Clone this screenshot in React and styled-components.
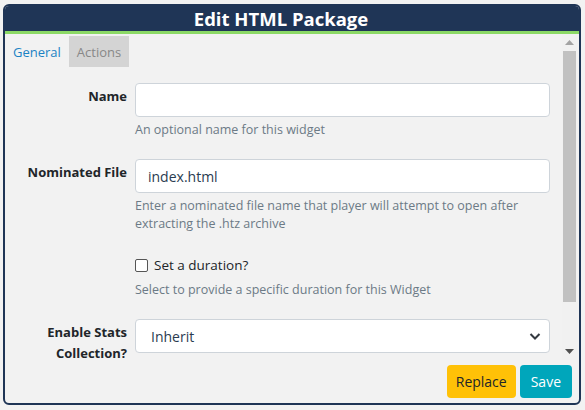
import React from "react";
import styled, { createGlobalStyle } from "styled-components";

const Global = createGlobalStyle`
  html, body { margin: 0; padding: 0; background: #f2f2f2; }
  body { font-family: "Open Sans", "Noto Sans", sans-serif; color: #212529; }
  * { box-sizing: border-box; }
`;

const Page = styled.div`
  padding: 4px 4px 5px 3px;
  height: 410px;
`;

const Panel = styled.div`
  width: 578px;
  height: 401px;
  border: 2px solid #1f3556;
  border-radius: 6px;
  background: #f2f2f2;
  display: flex;
  flex-direction: column;
  overflow: hidden;
`;

const Header = styled.div`
  flex: none;
  background: #1f3556;
  color: #fff;
  height: 28px;
  border-bottom: 3px solid #8cd966;
  display: flex;
  align-items: center;
  justify-content: center;
  font-weight: 700;
  font-size: 18.5px;
  padding: 0 22px 1px 0;
`;

const ScrollArea = styled.div`
  flex: 1;
  min-height: 0;
  display: flex;
  margin-right: 2px;
`;

const Content = styled.div`
  flex: 1;
  min-width: 0;
  overflow: hidden;
`;

const Scrollbar = styled.div`
  flex: none;
  width: 15px;
  display: flex;
  flex-direction: column;
  background: #f1f1f1;
`;

const ArrowBtn = styled.div`
  flex: none;
  height: 17px;
  display: flex;
  align-items: center;
  justify-content: center;
`;

const Track = styled.div`
  flex: 1;
  padding: 0 1px;
`;

const Thumb = styled.div`
  height: 251px;
  background: #c1c1c1;
`;

const Tabs = styled.div`
  display: flex;
  margin-top: 2px;
`;

const Tab = styled.div`
  height: 31px;
  padding: 0 8px;
  display: flex;
  align-items: center;
  font-size: 13px;
  color: ${(p) => (p.$active ? "#1b82c4" : "#888")};
  background: ${(p) => (p.$active ? "transparent" : "#d4d4d4")};
`;

const Form = styled.div`
  padding: 16px 12px 0 8px;
`;

const Row = styled.div`
  display: grid;
  grid-template-columns: 114px 1fr;
  column-gap: 8px;
  margin-bottom: 20px;
`;

const Label = styled.label`
  text-align: right;
  font-weight: 700;
  font-size: 13px;
  line-height: 21px;
  padding-top: 3px;
`;

const Input = styled.input`
  display: block;
  width: 100%;
  height: 34px;
  border: 1px solid #ced4da;
  border-radius: 4px;
  background: #fff;
  padding: 0 12px;
  font-family: inherit;
  font-size: 14px;
  color: #2a3b50;
  outline: none;
`;

const SelectBox = styled.div`
  position: relative;
  height: 34px;
  border: 1px solid #ced4da;
  border-radius: 4px;
  background: #fff;
  display: flex;
  align-items: center;
  padding: 0 15px;
  font-size: 14px;
  color: #2a3b50;
`;

const Chevron = styled.svg`
  position: absolute;
  right: 8px;
  top: 12px;
`;

const Help = styled.div`
  margin-top: 4px;
  font-size: 12.5px;
  line-height: 18px;
  color: #6c7a86;
`;

const CheckLine = styled.label`
  display: flex;
  align-items: center;
  gap: 6px;
  font-size: 13.5px;
  height: 24px;
  color: #212529;
`;

const Box = styled.span`
  width: 13px;
  height: 13px;
  border: 1px solid #555;
  border-radius: 2px;
  background: #fff;
`;

const Footer = styled.div`
  flex: none;
  height: 43px;
  display: flex;
  justify-content: flex-end;
  align-items: flex-start;
  gap: 4px;
  padding: 5px 7px 0 0;
`;

const Button = styled.button`
  height: 33px;
  padding: 0 ${(p) => (p.$kind === "warn" ? 9 : 11)}px;
  border: none;
  border-radius: 4px;
  font-family: inherit;
  font-size: 14px;
  background: ${(p) => (p.$kind === "warn" ? "#ffc107" : "#00a6bb")};
  color: ${(p) => (p.$kind === "warn" ? "#212529" : "#fff")};
`;

const Arrow = ({ down, color }) => (
  <svg width="9" height="5" viewBox="0 0 9 5">
    <path d={down ? "M0 0 H9 L4.5 5 Z" : "M0 5 H9 L4.5 0 Z"} fill={color} />
  </svg>
);

export default function App() {
  return (
    <>
      <Global />
      <Page>
        <Panel>
          <Header>Edit HTML Package</Header>
          <ScrollArea>
            <Content>
              <Tabs>
                <Tab $active>General</Tab>
                <Tab>Actions</Tab>
              </Tabs>
              <Form>
                <Row>
                  <Label>Name</Label>
                  <div>
                    <Input defaultValue="" />
                    <Help>An optional name for this widget</Help>
                  </div>
                </Row>
                <Row>
                  <Label>Nominated File</Label>
                  <div>
                    <Input defaultValue="index.html" />
                    <Help>
                      Enter a nominated file name that player will attempt to open after
                      extracting the .htz archive
                    </Help>
                  </div>
                </Row>
                <Row>
                  <div />
                  <div>
                    <CheckLine>
                      <Box />
                      Set a duration?
                    </CheckLine>
                    <Help>Select to provide a specific duration for this Widget</Help>
                  </div>
                </Row>
                <Row>
                  <Label>Enable Stats Collection?</Label>
                  <div>
                    <SelectBox>
                      Inherit
                      <Chevron width="12" height="9" viewBox="0 0 12 9">
                        <path d="M1.5 2 L6 6.5 L10.5 2" fill="none" stroke="#343a40" strokeWidth="2" />
                      </Chevron>
                    </SelectBox>
                    <Help>
                      Enable the collection of Proof of Play statistics for this Widget.
                      Ensure that 'Enable Stats Collection' is set to 'On' in the Display
                      Settings.
                    </Help>
                  </div>
                </Row>
              </Form>
            </Content>
            <Scrollbar>
              <ArrowBtn>
                <Arrow color="#a3a3a3" />
              </ArrowBtn>
              <Track>
                <Thumb />
              </Track>
              <ArrowBtn>
                <Arrow down color="#505050" />
              </ArrowBtn>
            </Scrollbar>
          </ScrollArea>
          <Footer>
            <Button $kind="warn">Replace</Button>
            <Button>Save</Button>
          </Footer>
        </Panel>
      </Page>
    </>
  );
}
